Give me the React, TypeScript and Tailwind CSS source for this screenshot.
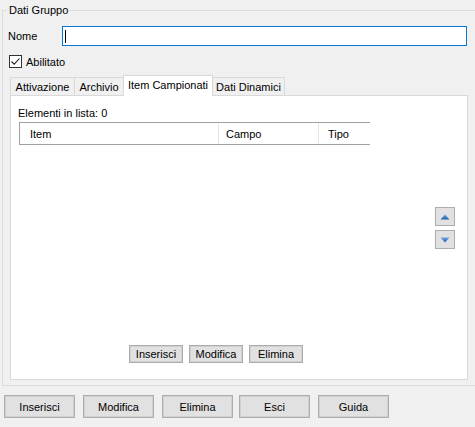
import React from "react";

const Btn = ({ label, className }: { label: string; className: string }) => (
  <div
    className={`flex items-center justify-center border border-[#adadad] bg-[#e1e1e1] shadow-[inset_0_0_0_1px_#d0d0d0] ${className}`}
  >
    {label}
  </div>
);

export default function App() {
  return (
    <div className="w-[475px] h-[427px] overflow-hidden bg-[#f0f0f0] text-[11px] leading-[14px] text-black font-['Liberation_Sans',Arial,sans-serif]">
      <div className="pt-[10px] pl-[2px]">
        <div className="relative w-[480px] h-[376px] border border-[#dcdcdc] pt-[15px] pl-[5px]">
          <span className="absolute -top-[8px] left-[4px] px-[2px] bg-[#f0f0f0]">Dati Gruppo</span>

          {/* Nome */}
          <div className="flex items-center h-[20px]">
            <span className="w-[54px]">Nome</span>
            <div className="w-[405px] h-[20px] border border-[#0078d7] bg-white flex items-center pl-[2px]">
              <span className="w-[1px] h-[13px] bg-black" />
            </div>
          </div>

          {/* Abilitato */}
          <div className="flex items-center mt-[9px] ml-[1px] h-[13px]">
            <div className="w-[13px] h-[13px] border border-[#333] bg-white flex items-center justify-center">
              <svg width="11" height="11" viewBox="0 0 11 11">
                <path d="M1.5 5.5 L4.2 8.2 L9.5 2.5" fill="none" stroke="#222" strokeWidth="1.1" />
              </svg>
            </div>
            <span className="ml-[4px]">Abilitato</span>
          </div>

          {/* Tabs */}
          <div className="mt-[7px] ml-[2px] w-[458px]">
            <div className="flex items-end h-[20px]">
              <div className="w-[64px] h-[18px] border-t border-l border-[#d9d9d9] flex items-center justify-center">Attivazione</div>
              <div className="w-[49px] h-[18px] border-t border-l border-[#d9d9d9] flex items-center justify-center">Archivio</div>
              <div className="relative z-10 w-[90px] h-[21px] -mb-[1px] border-t border-l border-r border-[#d9d9d9] bg-white flex items-center justify-center pb-[2px]">Item Campionati</div>
              <div className="w-[72px] h-[18px] border-t border-r border-[#d9d9d9] flex items-center justify-center">Dati Dinamici</div>
            </div>
            <div className="h-[285px] border border-[#d9d9d9] bg-white flex flex-col pt-[10px] pl-[7px]">
              <div className="h-[14px]">Elementi in lista: 0</div>
              <div className="mt-[2px] ml-[1px] w-[351px] h-[23px] border-t border-l border-b border-[#a0a0a0] flex items-center">
                <div className="w-[199px] h-full flex items-center pl-[10px] border-r border-[#e5e5e5]">Item</div>
                <div className="w-[100px] h-full flex items-center pl-[7px] border-r border-[#e5e5e5]">Campo</div>
                <div className="flex-1 h-full flex items-center pl-[9px]">Tipo</div>
              </div>
              <div className="mt-[62px] self-end mr-[12px] flex flex-col gap-[4px]">
                <div className="w-[20px] h-[19px] border border-[#adadad] bg-[#e1e1e1] flex items-center justify-center">
                  <svg width="10" height="6" viewBox="0 0 10 6">
                    <defs>
                      <linearGradient id="gu" x1="0" y1="0" x2="0" y2="1">
                        <stop offset="0" stopColor="#6aa6e6" />
                        <stop offset="1" stopColor="#1c5fae" />
                      </linearGradient>
                    </defs>
                    <polygon points="5,0.5 9.5,5.5 0.5,5.5" fill="url(#gu)" />
                  </svg>
                </div>
                <div className="w-[20px] h-[19px] border border-[#adadad] bg-[#e1e1e1] flex items-center justify-center">
                  <svg width="10" height="6" viewBox="0 0 10 6">
                    <defs>
                      <linearGradient id="gd" x1="0" y1="0" x2="0" y2="1">
                        <stop offset="0" stopColor="#6aa6e6" />
                        <stop offset="1" stopColor="#1c5fae" />
                      </linearGradient>
                    </defs>
                    <polygon points="0.5,0.5 9.5,0.5 5,5.5" fill="url(#gd)" />
                  </svg>
                </div>
              </div>
              <div className="mt-[96px] ml-[111px] flex gap-[6px]">
                <Btn label="Inserisci" className="w-[54px] h-[18px]" />
                <Btn label="Modifica" className="w-[54px] h-[18px]" />
                <Btn label="Elimina" className="w-[54px] h-[18px]" />
              </div>
            </div>
          </div>
        </div>
      </div>

      {/* Bottom buttons */}
      <div className="mt-[9px] flex">
        <Btn label="Inserisci" className="ml-[4px] w-[71px] h-[23px]" />
        <Btn label="Modifica" className="ml-[8px] w-[71px] h-[23px]" />
        <Btn label="Elimina" className="ml-[8px] w-[71px] h-[23px]" />
        <Btn label="Esci" className="ml-[6px] w-[71px] h-[23px]" />
        <Btn label="Guida" className="ml-[8px] w-[71px] h-[23px]" />
      </div>
    </div>
  );
}
